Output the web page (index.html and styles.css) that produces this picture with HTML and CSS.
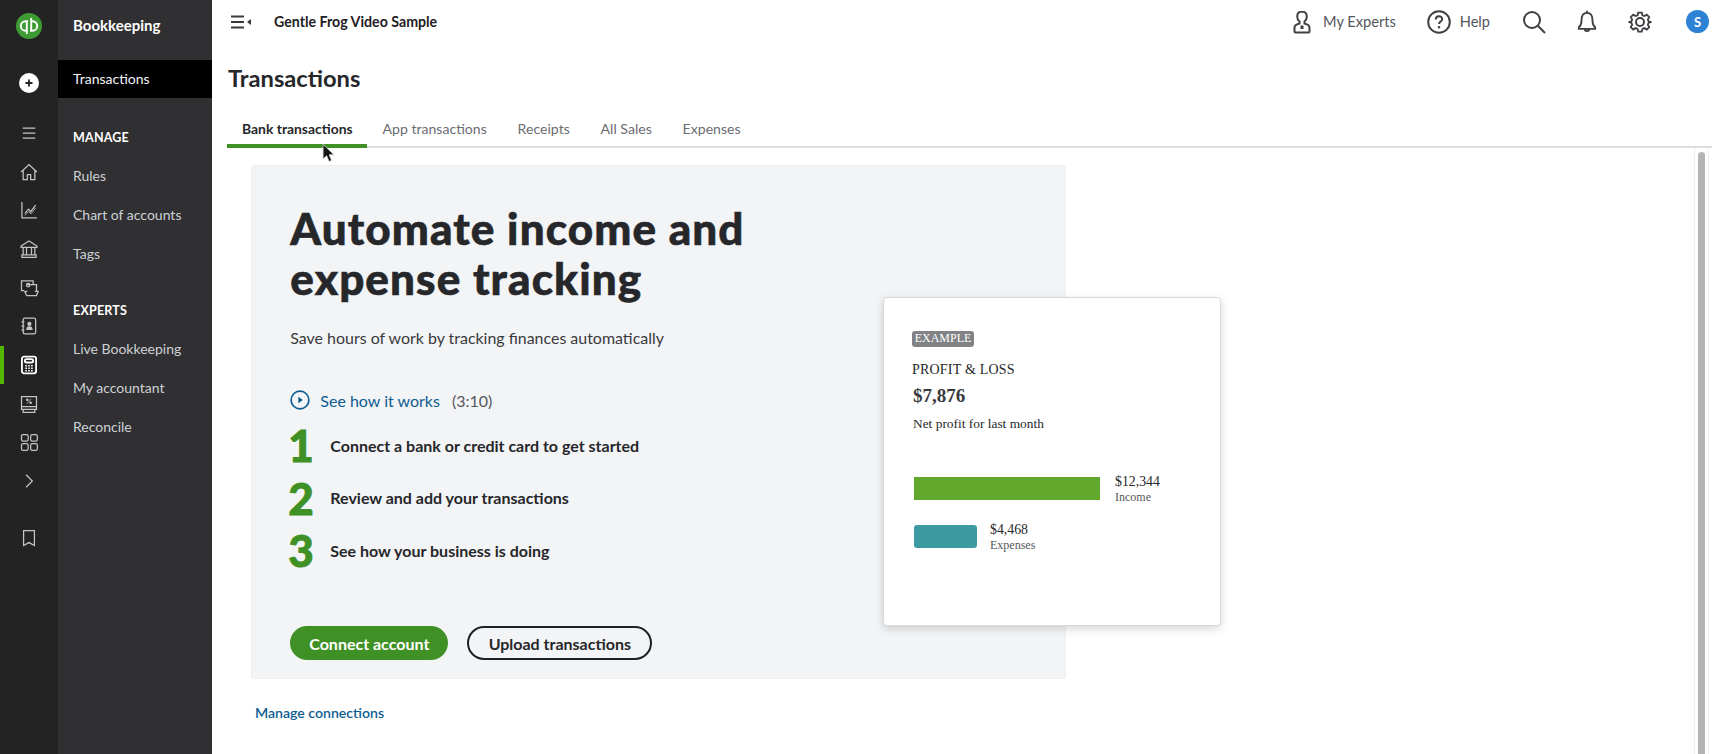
FILE: index.html
```html
<!DOCTYPE html>
<html lang="en">
<head>
<meta charset="utf-8">
<title>Transactions</title>
<link rel="stylesheet" href="styles.css">
</head>
<body>
<div class="app">
  <aside class="rail">
    <div class="logo">
      <svg viewBox="0 0 26 26" width="26" height="26"><circle cx="13" cy="13" r="13" fill="#3f9c35"/><path d="M12 8.200H9.600a4.800 4.800 0 0 0 0 9.600h1.200V8.900V21" fill="none" stroke="#fff" stroke-width="1.900"/><path d="M14 17.800h2.400a4.800 4.800 0 0 0 0-9.600h-1.200V17.100V5" fill="none" stroke="#fff" stroke-width="1.900"/></svg>
    </div>
    <div class="plus">
      <svg viewBox="0 0 20 20" width="20" height="20"><circle cx="10" cy="10" r="10" fill="#fff"/><path d="M10 6.500v7M6.500 10h7" stroke="#222" stroke-width="1.800"/></svg>
    </div>
    <div class="rail-items">
      <div class="rail-item"><svg viewBox="0 0 24 24" class="ri"><path d="M4.500 6h15M4.500 12h15M4.500 18h15"/></svg></div>
      <div class="rail-item"><svg viewBox="0 0 24 24" class="ri"><path d="M2.500 12 12 3l9.500 9M5 10v11h5v-6h4v6h5V10"/></svg></div>
      <div class="rail-item"><svg viewBox="0 0 24 24" class="ri"><path d="M3.500 2.500v19h18M7 16l4.500-5 2.500 3 6-8"/><path d="M7 18.500l4.500-4.500 3 2.500 5.500-7" stroke-width="1"/></svg></div>
      <div class="rail-item"><svg viewBox="0 0 24 24" class="ri"><path d="M2.500 8.500 12 2.500l9.500 6v1.500h-19zM5 10v9M9 10v9M15 10v9M19 10v9M3.500 19h17v3h-17z"/></svg></div>
      <div class="rail-item"><svg viewBox="0 0 24 24" class="ri"><path d="M6 15H3V3.500h14V8M9.500 8H21v8M9 21l-2-5h3M9 21h12l2-5h-4"/><circle cx="11" cy="8.500" r="2"/></svg></div>
      <div class="rail-item"><svg viewBox="0 0 24 24" class="ri"><rect x="5" y="2.500" width="15" height="19" rx="2"/><path d="M3 7h3.500M3 12h3.500M3 17h3.500"/><circle cx="12.500" cy="9.500" r="1.800" fill="#c8c8c8"/><path d="M9.500 16c0-4 6-4 6 0z" fill="#c8c8c8"/></svg></div>
      <div class="rail-item rail-active"><svg viewBox="0 0 24 24" class="ri ri-on"><rect x="3.500" y="2" width="17" height="20" rx="2.500"/><rect x="7" y="5" width="10" height="4" rx="2"/><path d="M7.500 13h2M11 13h2M14.500 13h2M7.500 16h2M11 16h2M14.500 16h2M7.500 19h2M11 19h2M14.500 19h2" stroke-width="1.800"/></svg></div>
      <div class="rail-item"><svg viewBox="0 0 24 24" class="ri"><path d="M3 3h18v12H3zM3 15v3.500h18V15M5 18.500V22h14v-3.500"/><path d="M9.500 11.500l5-5.500" stroke-width="1"/><circle cx="10" cy="7" r=".8"/><circle cx="14" cy="10.500" r=".8"/></svg></div>
      <div class="rail-item"><svg viewBox="0 0 24 24" class="ri"><rect x="3" y="3" width="8" height="8" rx="2"/><rect x="14" y="3" width="8" height="8" rx="2"/><rect x="3" y="14" width="8" height="8" rx="2"/><rect x="14" y="14" width="8" height="8" rx="2"/></svg></div>
      <div class="rail-item"><svg viewBox="0 0 24 24" class="ri"><path d="M8.500 4.500 16 12l-7.500 7.500"/></svg></div>
      <div class="rail-item rail-bottom"><svg viewBox="0 0 24 24" class="ri"><path d="M5.500 3h13v18L12 17.500 5.500 21z"/></svg></div>
    </div>
  </aside>

  <nav class="nav">
    <div class="nav-title">Bookkeeping</div>
    <a class="nav-link nav-current">Transactions</a>
    <div class="nav-head nav-head-first">MANAGE</div>
    <a class="nav-link">Rules</a>
    <a class="nav-link">Chart of accounts</a>
    <a class="nav-link">Tags</a>
    <div class="nav-head nav-head-second">EXPERTS</div>
    <a class="nav-link">Live Bookkeeping</a>
    <a class="nav-link">My accountant</a>
    <a class="nav-link">Reconcile</a>
  </nav>

  <main class="main">
    <header class="topbar">
      <svg class="menu-toggle" viewBox="0 0 20 14" width="20" height="14"><path d="M0 1.500h13M0 7h13M0 12.500h13" stroke="#393a3d" stroke-width="1.800" fill="none"/><path d="M20 4v6l-4-3z" fill="#393a3d"/></svg>
      <span class="company">Gentle Frog Video Sample</span>
      <div class="top-actions">
        <span class="top-action experts">
          <svg viewBox="0 0 20 24" width="20" height="24" class="ti ti-heavy"><path d="M10 1.500c-3.200 0-4.800 2.200-4.800 5 0 2.400 1 4 2.300 5v2C3.500 14.500 2.500 15.500 2.500 18v3.500c0 .6.400 1 1 1h13c.6 0 1-.4 1-1V18c0-2.500-1-3.500-5-4.500v-2c1.300-1 2.300-2.600 2.300-5 0-2.800-1.600-5-4.800-5z"/><path d="M10 15.500v3.500" stroke-width="3"/></svg>
          My Experts
        </span>
        <span class="top-action help">
          <svg viewBox="0 0 24 24" width="24" height="24" class="ti ti-heavy"><circle cx="12" cy="12" r="10.800"/><path d="M8.800 9.500c0-4.300 6.400-4.300 6.400-.3 0 2.300-3.200 2.300-3.200 4.800" stroke-width="2"/><circle cx="12" cy="17.300" r=".6" stroke-width="1.400"/></svg>
          Help
        </span>
        <svg viewBox="0 0 24 24" width="24" height="24" class="ti ti-heavy t-search"><circle cx="10" cy="10" r="8"/><path d="M15.800 15.800 23 23"/></svg>
        <svg viewBox="0 0 22 26" width="20" height="24" class="ti ti-heavy t-bell"><path d="M11 3c-4.500 0-6 3.500-6 8 0 4-.8 6-3 8v1.500h18V19c-2.200-2-3-4-3-8 0-4.500-1.500-8-6-8zM11 .5V3M8.500 20.500c0 3.500 5 3.500 5 0"/></svg>
        <svg viewBox="0 0 24 24" width="24" height="24" class="ti ti-heavy t-gear"><circle cx="12" cy="12" r="4"/><path d="M10 1.500h4l.7 3 2.200.9 2.600-1.600 2.800 2.800-1.600 2.600.9 2.200 3 .7v0l-3 .7-.9 2.200 1.600 2.600-2.800 2.800-2.600-1.600-2.200.9-.7 3h-4l-.7-3-2.200-.9-2.600 1.600-2.800-2.800 1.600-2.600-.9-2.200-3-.7v0l3-.7.9-2.200-1.600-2.600 2.800-2.800 2.600 1.600 2.200-.9z" transform="translate(1.200 1.200) scale(.9)"/></svg>
        <span class="avatar">S</span>
      </div>
    </header>

    <h1 class="page-title">Transactions</h1>

    <div class="tabs">
      <a class="tab tab-active">Bank transactions</a>
      <a class="tab">App transactions</a>
      <a class="tab">Receipts</a>
      <a class="tab">All Sales</a>
      <a class="tab">Expenses</a>
    </div>

    <div class="content">
      <div class="scroll-area">
        <section class="panel">
          <h2 class="headline">Automate income and<br>expense tracking</h2>
          <p class="sub">Save hours of work by tracking finances automatically</p>
          <div class="video">
            <svg viewBox="0 0 18 18" width="20" height="20"><circle cx="9" cy="9" r="8" fill="none" stroke="#0d5c92" stroke-width="1.500"/><path d="M7.500 6v6l4-3z" fill="#0d5c92"/></svg>
            <a class="link video-link">See how it works</a>
            <span class="duration">(3:10)</span>
          </div>
          <ol class="steps">
            <li class="step"><span class="num">1</span><span class="step-text">Connect a bank or credit card to get started</span></li>
            <li class="step"><span class="num">2</span><span class="step-text">Review and add your transactions</span></li>
            <li class="step"><span class="num">3</span><span class="step-text">See how your business is doing</span></li>
          </ol>
          <div class="actions">
            <button class="btn btn-primary">Connect account</button>
            <button class="btn btn-outline">Upload transactions</button>
          </div>

          <aside class="report">
            <span class="badge">EXAMPLE</span>
            <div class="report-title">PROFIT &amp; LOSS</div>
            <div class="report-value">$7,876</div>
            <div class="report-note">Net profit for last month</div>
            <div class="bar-row bar-row-first">
              <span class="bar bar-income"></span>
              <div class="bar-label"><div class="bar-amount">$12,344</div><div class="bar-name">Income</div></div>
            </div>
            <div class="bar-row">
              <span class="bar bar-expense"></span>
              <div class="bar-label"><div class="bar-amount">$4,468</div><div class="bar-name">Expenses</div></div>
            </div>
          </aside>
        </section>
        <a class="link manage">Manage connections</a>
      </div>
      <div class="scrollbar"><div class="thumb"></div></div>
    </div>
  </main>
</div>
<svg class="cursor" viewBox="0 0 12 18" width="13" height="20"><path d="M1 1v13.500l3.300-3 2.200 5.300 2.300-1-2.200-5.200H11z" fill="#111" stroke="#ddd" stroke-width=".7"/></svg>
</body>
</html>
```

FILE: styles.css
```css
* { box-sizing: border-box; }
html, body { margin: 0; height: 100%; }
body {
  font-family: "Lato", "Open Sans", sans-serif;
  color: #393a3d;
  background: #fff;
  overflow: hidden;
}
.app { display: flex; height: 754px; }

/* icon rail */
.rail { width: 58px; flex: none; background: #232323; display: flex; flex-direction: column; align-items: center; padding-top: 13px; }
.logo { height: 26px; }
.logo svg, .plus svg { display: block; }
.plus { margin-top: 34px; height: 20px; }
.rail-items { margin-top: 20.6px; width: 100%; }
.rail-item { height: 38.7px; display: flex; align-items: center; justify-content: center; position: relative; }
.rail-active::before { content: ""; position: absolute; left: 0; top: 0; bottom: 0; width: 4px; background: #53b700; }
.rail-bottom { margin-top: 18.2px; }
.ri { width: 20px; height: 20px; fill: none; stroke: #c4c4c4; stroke-width: 1.5; }
.ri-on { stroke: #fff; stroke-width: 2.2; }

/* secondary nav */
.nav { width: 154px; flex: none; background: #303032; color: #cdd0d5; font-size: 14px; }
.nav-title { height: 60px; padding: 11px 0 0 15px; line-height: 28px; color: #fff; font-weight: 700; font-size: 15px; }
.nav-link { display: block; height: 39px; line-height: 38px; padding-left: 15px; }
.nav-current { height: 38px; background: #000; color: #f4f5f8; }
.nav-head { height: 39px; line-height: 40px; padding-left: 15px; color: #fff; font-size: 12.5px; font-weight: 700; letter-spacing: .2px; }
.nav-head-first { margin-top: 19.5px; }
.nav-head-second { margin-top: 17.5px; }

/* main */
.main { flex: 1; min-width: 0; display: flex; flex-direction: column; }
.topbar { height: 43px; flex: none; display: flex; align-items: center; padding-left: 19px; }
.menu-toggle { flex: none; }
.company { margin-left: 23px; color: #1f2024; font-size: 14.2px; font-weight: 700; }
.top-actions { margin-left: auto; display: flex; align-items: center; height: 100%; color: #54565b; font-size: 14.6px; }
.top-action { display: flex; align-items: center; }
.ti { fill: none; stroke: #4a4b4f; stroke-width: 1.6; flex: none; }
.ti-heavy { stroke: #3f4044; stroke-width: 2; }
.experts svg { margin-right: 11px; }
.help { margin-left: 31px; }
.help svg { margin-right: 9px; }
.t-search { margin-left: 32px; }
.t-bell { margin-left: 31px; }
.t-gear { margin-left: 31px; }
.avatar { width: 23px; height: 23px; margin-left: 34px; margin-right: 19px; border-radius: 50%; background: #2e82d6; color: #fff; font-size: 13px; font-weight: 700; display: flex; align-items: center; justify-content: center; }

.page-title { margin: 21px 0 0 16px; height: 28px; line-height: 28px; font-size: 23.7px; font-weight: 700; color: #26272a; }
.tabs { margin: 18px 16px 0 15px; height: 38px; display: flex; border-bottom: 2px solid #dcdddf; flex: none; font-size: 14.1px; color: #6b6c72; }
.tab { height: 38px; line-height: 38px; padding: 0 15.4px; }
.tab-active { color: #26272a; font-weight: 700; font-size: 13.9px; border-bottom: 4px solid #3f9126; padding: 0 14.5px 0 15px; }

.content { flex: 1; min-height: 0; display: flex; }
.scroll-area { flex: 1; min-width: 0; padding: 17px 0 0 39px; }
.scrollbar { width: 15px; flex: none; margin-right: 19px; padding: 4px 3px 0; border-left: 1px solid #eee; border-right: 1px solid #eee; }
.thumb { height: 100%; background: #b4b4b4; border-radius: 4px 4px 0 0; }

.panel { position: relative; width: 815px; height: 514px; padding: 37px 38.3px 0; background: #f3f4f6; border: 1px solid #eeeff1; border-radius: 3px; }
.headline { margin: 0; font-size: 44px; line-height: 50px; font-weight: 900; letter-spacing: 1.1px; color: #26272a; -webkit-text-stroke: .6px #26272a; }
.sub { margin: 23px 0 0; font-size: 15.95px; line-height: 24px; color: #393a3d; }
.video { margin-top: 38px; height: 24px; display: flex; align-items: center; font-size: 16px; }
.video svg { flex: none; }
.link { color: #0d5c92; }
.video-link { margin-left: 10px; }
.duration { margin-left: 12px; color: #55575c; }
.steps { list-style: none; margin: 7px 0 0; padding: 0; }
.step { display: flex; align-items: center; height: 52.5px; }
.num { width: 42px; margin-left: -2px; font-size: 44px; line-height: 52px; font-weight: 900; color: #3f9126; -webkit-text-stroke: .9px #3f9126; }
.step-text { font-size: 16px; font-weight: 700; color: #26272a; }
.actions { margin-top: 49.6px; display: flex; gap: 19px; }
.btn { height: 34px; padding: 0; font: 700 16px "Lato", sans-serif; border-radius: 17px; }
.btn-primary { width: 158px; background: #3f9126; color: #fff; border: 0; }
.btn-outline { width: 185px; background: transparent; color: #26272a; border: 2px solid #1f2024; }

.report { position: absolute; left: 631px; top: 131px; width: 338px; height: 329px; padding: 33px 28px 0; background: #fff; border: 1px solid #d8d9db; border-radius: 4px; box-shadow: 0 3px 10px rgba(0,0,0,.16); font-family: "Liberation Serif", serif; color: #26272a; }
.badge { display: block; width: 62px; height: 16px; line-height: 15px; background: #808285; color: #fff; font-size: 12px; text-align: center; border-radius: 3px; }
.report-title { margin-top: 14px; font-size: 14px; line-height: 18px; letter-spacing: .2px; }
.report-value { margin: 5px 0 0 1px; font-size: 19px; line-height: 24px; font-weight: 700; color: #393a3d; }
.report-note { margin: 7px 0 0 1px; font-size: 13.4px; line-height: 18px; }
.bar-row { display: flex; margin-left: 2px; height: 23px; align-items: center; }
.bar-row-first { margin-top: 44px; }
.bar-row + .bar-row { margin-top: 25px; }
.bar { height: 23px; flex: none; }
.bar-income { width: 186px; background: #62a82c; }
.bar-expense { width: 63px; background: #3d9aa0; border-radius: 3px; }
.bar-label { margin-left: 15px; }
.bar-row + .bar-row .bar-label { margin-left: 13px; }
.bar-amount { font-size: 13.8px; line-height: 16px; }
.bar-name { font-size: 12px; line-height: 14px; color: #55575c; }

.manage { display: block; margin: 25px 0 0 4px; font-size: 14.1px; line-height: 18px; font-weight: 600; }
.cursor { position: absolute; left: 322px; top: 143px; }
```
